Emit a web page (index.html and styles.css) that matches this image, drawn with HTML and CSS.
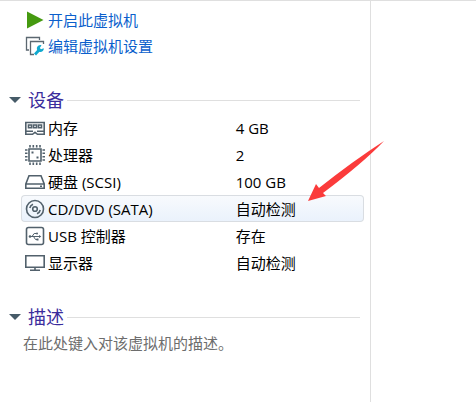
FILE: index.html
```html
<!DOCTYPE html>
<html lang="zh-CN">
<head>
<meta charset="utf-8">
<title>虚拟机</title>
<link rel="stylesheet" href="styles.css">
</head>
<body>
<div class="window">
  <main class="summary">
    <nav class="actions">
      <a class="action" href="#start">
        <svg class="icon" viewBox="0 0 20 20"><path d="M2 1.500L18.500 10L2 18.500Z" fill="#459a10"/></svg>开启此虚拟机</a>
      <a class="action" href="#settings">
        <svg class="icon" viewBox="0 0 20 20" fill="none"><path d="M4 14H1.500V1.500H14.500V4" stroke="#5b6770" stroke-width="1.300"/><path d="M9 18.500H5.500V5.500H18.500V8" stroke="#5b6770" stroke-width="1.300"/><path d="M10 18.500L14.500 13.500" stroke="#10a9cf" stroke-width="2.800"/><path d="M16.500 9.200A3.500 3.500 0 1 0 18.800 12.200L16 13.200L14.800 12Z" fill="#10a9cf"/></svg>编辑虚拟机设置</a>
    </nav>

    <section class="devices">
      <h2 class="heading"><svg class="caret" viewBox="0 0 12 6"><path d="M0 0H12L6 6Z"/></svg>设备</h2>
      <table class="device-table">
        <tr>
          <th scope="row"><span class="device"><svg class="icon line" viewBox="0 0 20 20"><path d="M.8 4.500H19.200V16.300H12.500L10 14.300L7.500 16.300H.8ZM.8 13.200H8M12 13.200H19.200"/><path d="M3.500 7H6.500V9.700H3.500ZM8.500 7H11.500V9.700H8.500ZM13.500 7H16.500V9.700H13.500Z"/></svg>内存</span></th>
          <td>4 GB</td>
        </tr>
        <tr>
          <th scope="row"><span class="device"><svg class="icon line" viewBox="0 0 20 20"><path d="M4 4H16V16H4Z"/><path d="M5 0V2.500M8.300 0V2.500M11.700 0V2.500M15 0V2.500M5 17.500V20M8.300 17.500V20M11.700 17.500V20M15 17.500V20M0 5H2.500M0 8.300H2.500M0 11.700H2.500M0 15H2.500M17.500 5H20M17.500 8.300H20M17.500 11.700H20M17.500 15H20"/><path class="solid" d="M6.500 6.500H8.500V8.500H6.500ZM11.500 11.500H13.500V13.500H11.500Z"/></svg>处理器</span></th>
          <td>2</td>
        </tr>
        <tr>
          <th scope="row"><span class="device"><svg class="icon line" viewBox="0 0 20 20"><path d="M.8 12L4 3.700H16L19.200 12V16.200H.8ZM.8 12H19.200M15 14.200H17"/></svg>硬盘 (SCSI)</span></th>
          <td>100 GB</td>
        </tr>
        <tr class="selected">
          <th scope="row"><span class="device"><svg class="icon line" viewBox="0 0 20 20"><circle cx="10" cy="10" r="8.500"/><circle cx="10" cy="10" r="2.300"/><path d="M4.800 9A5.300 5.300 0 0 1 8 5.200M15.200 11A5.300 5.300 0 0 1 12 14.800"/></svg>CD/DVD (SATA)</span></th>
          <td>自动检测</td>
        </tr>
        <tr>
          <th scope="row"><span class="device"><svg class="icon line" viewBox="0 0 20 20"><rect x="1.500" y="1.500" width="17" height="17" rx="2"/><g class="thin"><path d="M5 10.500H15M7 10.500L9.200 7.500H11.500M8.500 10.500L10.500 13.500H12"/><circle class="solid" cx="5" cy="10.500" r="1.300"/><circle class="solid" cx="12" cy="7.500" r="1"/><path class="solid" d="M14 9L16.300 10.500L14 12ZM11.500 12.500H13.500V14.500H11.500Z"/></g></svg>USB 控制器</span></th>
          <td>存在</td>
        </tr>
        <tr>
          <th scope="row"><span class="device"><svg class="icon line" viewBox="0 0 20 20"><path d="M.8 2.800H19.200V14.200H.8ZM5 17.300H15M10 14.300V17"/></svg>显示器</span></th>
          <td>自动检测</td>
        </tr>
      </table>
    </section>

    <section>
      <h2 class="heading"><svg class="caret" viewBox="0 0 12 6"><path d="M0 0H12L6 6Z"/></svg>描述</h2>
      <p class="description">在此处键入对该虚拟机的描述。</p>
    </section>
  </main>
  <svg class="pointer" viewBox="0 0 78 60"><path d="M0 60L8 43L11 47Q45 20 76 0Q55 22 15 52L18 55Z"/></svg>
</div>
</body>
</html>
```
FILE: styles.css
```css
* {
  box-sizing: border-box;
}

body {
  margin: 0;
  background: #fff;
  color: #000;
  font: 15px/22px "Open Sans", "Noto Sans CJK SC", sans-serif;
}

.window {
  position: relative;
  display: grid;
  grid-template-columns: 371fr 105fr;
  min-height: 100vh;
  border-top: 1px solid #dfdfdf;
}

.summary {
  padding: 6px 6px 0 9px;
  border-right: 1px solid #dfdfdf;
}

.actions {
  margin: 0 0 26px 16px;
}

.action {
  display: flex;
  align-items: center;
  gap: 3px;
  height: 26px;
  color: #0b5fcc;
  text-decoration: none;
}

.icon {
  flex: none;
  width: 20px;
  height: 20px;
}

.line {
  fill: none;
  stroke: #52616c;
  stroke-width: 1.6;
}

.line .thin {
  stroke-width: 1;
}

.line .solid {
  fill: #52616c;
  stroke: none;
}

.heading {
  display: flex;
  align-items: center;
  height: 30px;
  margin: 0 4px 0 0;
  color: #3a2c9c;
  font-size: 18px;
  font-weight: 400;
}

.heading::after {
  content: "";
  flex: 1;
  height: 1px;
  margin-left: 3px;
  background: #dfdfdf;
}

.caret {
  width: 12px;
  height: 6px;
  margin-right: 7px;
  fill: #465b68;
}

.devices {
  margin-bottom: 26px;
}

.devices .heading {
  margin-bottom: -1px;
}

.device-table {
  width: calc(100% - 12px);
  margin-left: 12px;
  border-spacing: 0;
  table-layout: fixed;
}

.device-table th,
.device-table td {
  height: 27px;
  padding: 0 3px;
  border: 1px solid transparent;
  font-weight: 400;
  text-align: left;
}

.device-table th {
  width: 62%;
  border-right: 0;
}

.device-table td {
  padding-left: 2px;
  border-left: 0;
}

.device {
  display: flex;
  align-items: center;
  gap: 3px;
}

.selected th,
.selected td {
  border-color: #d9dde2;
  background: linear-gradient(#f8fafd, #eaf2fc);
}

.selected th {
  border-radius: 4px 0 0 4px;
}

.selected td {
  border-radius: 0 4px 4px 0;
}

.description {
  margin: 0 0 0 14px;
  color: #6d6d6d;
}

.pointer {
  position: absolute;
  top: 140px;
  left: 308px;
  width: 78px;
  height: 60px;
  fill: #fb3b3b;
}
```
